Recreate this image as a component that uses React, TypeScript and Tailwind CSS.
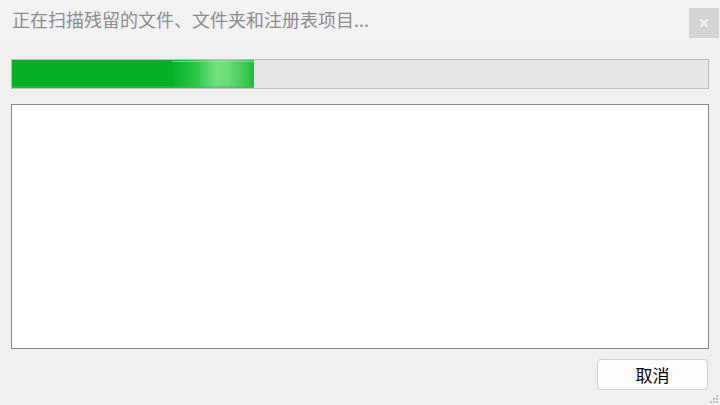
import React from 'react';

export default function App() {
  return (
    <div className="w-[720px] h-[405px] bg-[#f0f0f0] flex flex-col relative overflow-hidden" style={{ fontFamily: '"Microsoft YaHei", "Noto Sans CJK SC", sans-serif' }}>
      {/* Title bar */}
      <div className="h-[42px] bg-[#f2f2f2] flex items-start justify-between shrink-0">
        <div className="pl-[12px] pt-[6px] text-[18px] leading-[26px] text-[#8c8c8c]">
          正在扫描残留的文件、文件夹和注册表项目...
        </div>
        <div className="mt-[8px] mr-[1px] w-[30px] h-[30px] bg-[#d3d3d3] flex items-center justify-center">
          <svg width="10" height="10" viewBox="0 0 10 10">
            <path d="M1.5 1.5 L8.5 8.5 M8.5 1.5 L1.5 8.5" stroke="#f3f3f3" strokeWidth="2" />
          </svg>
        </div>
      </div>

      <div className="flex flex-col px-[11px] pt-[17px] flex-1">
        {/* Progress bar */}
        <div className="h-[30px] border border-[#bcbcbc] bg-[#e6e6e6] relative">
          <div
            className="h-full w-[242px] relative"
            style={{
              background:
                'linear-gradient(to right, #06b025 0%, #06b025 66%, #2cc648 76%, #70e07c 84%, #6fdc7a 89%, #3ec954 96%, #1bbc3a 100%)',
            }}
          >
            <div className="absolute left-[160px] right-0 top-[1px] h-[1px] bg-[#8ee898] opacity-70" />
            <div className="absolute left-0 right-0 bottom-0 h-[2px] bg-[#30c24a] opacity-50" />
          </div>
        </div>

        {/* List box */}
        <div className="mt-[15px] h-[245px] border border-[#828790] bg-white" />

        {/* Footer */}
        <div className="flex justify-end pt-[10px] pr-[1px]">
          <button className="w-[111px] h-[31px] border border-[#d0d0d0] rounded-[4px] bg-[#fdfdfd] text-[17px] text-black leading-none flex items-center justify-center">
            取消
          </button>
        </div>
      </div>

      {/* Resize grip */}
      <div className="absolute right-[2px] bottom-[2px] grid grid-cols-3 gap-[1px]">
        <span className="w-[2px] h-[2px]" />
        <span className="w-[2px] h-[2px]" />
        <span className="w-[2px] h-[2px] bg-[#bdbdbd]" />
        <span className="w-[2px] h-[2px]" />
        <span className="w-[2px] h-[2px] bg-[#bdbdbd]" />
        <span className="w-[2px] h-[2px] bg-[#bdbdbd]" />
        <span className="w-[2px] h-[2px] bg-[#bdbdbd]" />
        <span className="w-[2px] h-[2px] bg-[#bdbdbd]" />
        <span className="w-[2px] h-[2px] bg-[#bdbdbd]" />
      </div>
    </div>
  );
}
